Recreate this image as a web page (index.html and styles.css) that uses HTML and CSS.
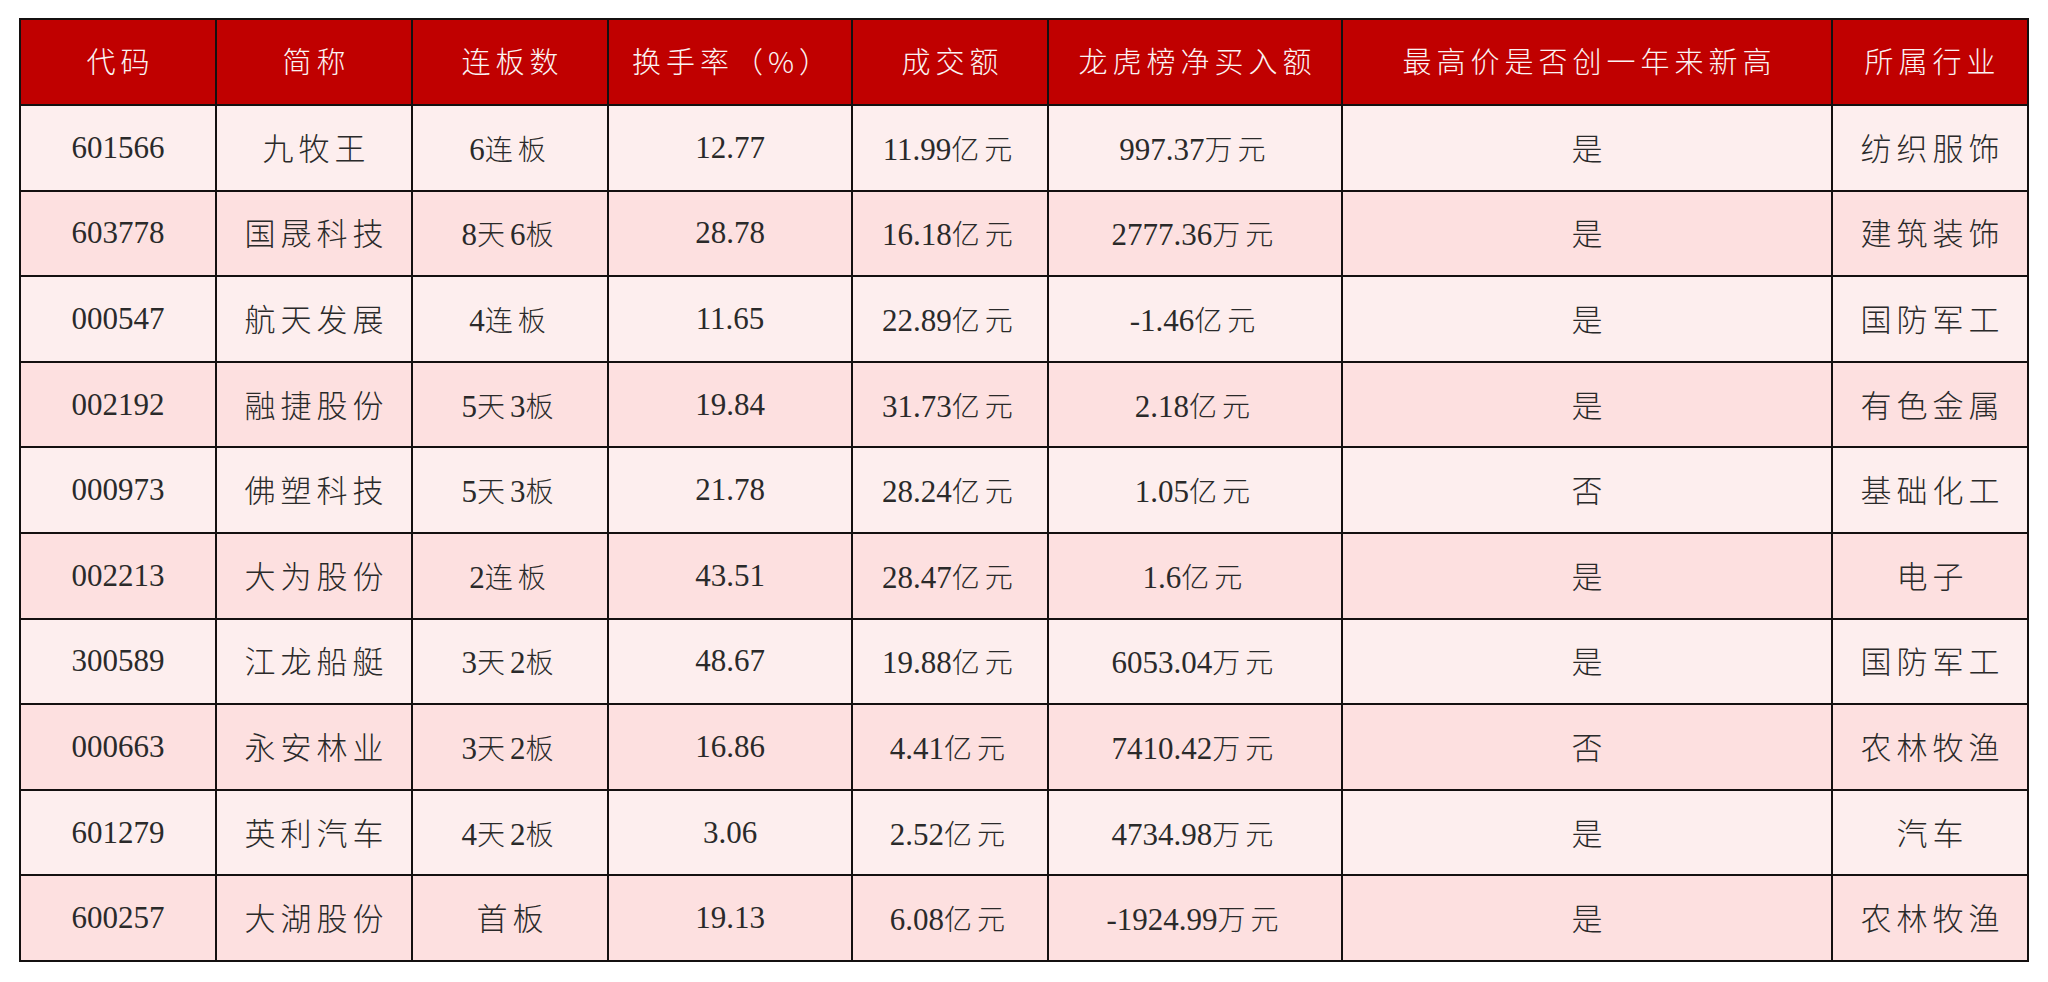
FILE: index.html
```html
<!DOCTYPE html>
<html lang="zh-CN">
<head>
<meta charset="utf-8">
<title>连板股</title>
<link rel="stylesheet" href="styles.css">
</head>
<body>
<table class="board">
  <colgroup>
    <col class="c-code"><col class="c-name"><col class="c-streak"><col class="c-turn">
    <col class="c-vol"><col class="c-lhb"><col class="c-high"><col class="c-ind">
  </colgroup>
  <thead>
    <tr>
      <th>代码</th><th>简称</th><th>连板数</th><th>换手率（%）</th>
      <th>成交额</th><th>龙虎榜净买入额</th><th>最高价是否创一年来新高</th><th>所属行业</th>
    </tr>
  </thead>
  <tbody>
    <tr><td>601566</td><td class="zh">九牧王</td><td>6<span class="zh">连板</span></td><td>12.77</td><td>11.99<span class="zh">亿元</span></td><td>997.37<span class="zh">万元</span></td><td class="zh">是</td><td class="zh">纺织服饰</td></tr>
    <tr><td>603778</td><td class="zh">国晟科技</td><td>8<span class="zh">天</span>6<span class="zh">板</span></td><td>28.78</td><td>16.18<span class="zh">亿元</span></td><td>2777.36<span class="zh">万元</span></td><td class="zh">是</td><td class="zh">建筑装饰</td></tr>
    <tr><td>000547</td><td class="zh">航天发展</td><td>4<span class="zh">连板</span></td><td>11.65</td><td>22.89<span class="zh">亿元</span></td><td>-1.46<span class="zh">亿元</span></td><td class="zh">是</td><td class="zh">国防军工</td></tr>
    <tr><td>002192</td><td class="zh">融捷股份</td><td>5<span class="zh">天</span>3<span class="zh">板</span></td><td>19.84</td><td>31.73<span class="zh">亿元</span></td><td>2.18<span class="zh">亿元</span></td><td class="zh">是</td><td class="zh">有色金属</td></tr>
    <tr><td>000973</td><td class="zh">佛塑科技</td><td>5<span class="zh">天</span>3<span class="zh">板</span></td><td>21.78</td><td>28.24<span class="zh">亿元</span></td><td>1.05<span class="zh">亿元</span></td><td class="zh">否</td><td class="zh">基础化工</td></tr>
    <tr><td>002213</td><td class="zh">大为股份</td><td>2<span class="zh">连板</span></td><td>43.51</td><td>28.47<span class="zh">亿元</span></td><td>1.6<span class="zh">亿元</span></td><td class="zh">是</td><td class="zh">电子</td></tr>
    <tr><td>300589</td><td class="zh">江龙船艇</td><td>3<span class="zh">天</span>2<span class="zh">板</span></td><td>48.67</td><td>19.88<span class="zh">亿元</span></td><td>6053.04<span class="zh">万元</span></td><td class="zh">是</td><td class="zh">国防军工</td></tr>
    <tr><td>000663</td><td class="zh">永安林业</td><td>3<span class="zh">天</span>2<span class="zh">板</span></td><td>16.86</td><td>4.41<span class="zh">亿元</span></td><td>7410.42<span class="zh">万元</span></td><td class="zh">否</td><td class="zh">农林牧渔</td></tr>
    <tr><td>601279</td><td class="zh">英利汽车</td><td>4<span class="zh">天</span>2<span class="zh">板</span></td><td>3.06</td><td>2.52<span class="zh">亿元</span></td><td>4734.98<span class="zh">万元</span></td><td class="zh">是</td><td class="zh">汽车</td></tr>
    <tr><td>600257</td><td class="zh">大湖股份</td><td class="zh">首板</td><td>19.13</td><td>6.08<span class="zh">亿元</span></td><td>-1924.99<span class="zh">万元</span></td><td class="zh">是</td><td class="zh">农林牧渔</td></tr>
  </tbody>
</table>
</body>
</html>
```

FILE: styles.css
```css
html, body {
  margin: 0;
  padding: 0;
  background: #ffffff;
}

body {
  font-family: "Liberation Serif", "Noto Sans CJK SC", serif;
  color: #2a2a2a;
}

.board {
  margin: 18px 0 0 19px;
  width: 2010px;
  table-layout: fixed;
  border-collapse: collapse;
}

.c-code, .c-name, .c-streak, .c-vol, .c-ind { width: 196px; }
.c-turn { width: 244px; }
.c-lhb { width: 294px; }
.c-high { width: 490px; }

.board th,
.board td {
  border: 2px solid #141010;
  text-align: center;
  vertical-align: middle;
  padding: 0;
  white-space: nowrap;
}

.board th {
  height: 86px;
  background: #c00000;
  color: #fbf3f3;
  font-family: "Noto Sans CJK SC", sans-serif;
  font-weight: 300;
  font-size: 29px;
  letter-spacing: 5px;
  text-indent: 5px;
  padding-bottom: 4px;
  box-sizing: border-box;
}

.board td {
  height: 85.6px;
  font-size: 31px;
  box-sizing: border-box;
}

.board tbody tr:nth-child(odd) td { background: #fdeeee; }
.board tbody tr:nth-child(even) td { background: #fde0e0; }

.zh {
  font-family: "Noto Sans CJK SC", sans-serif;
  font-weight: 300;
  font-size: 28px;
  letter-spacing: 5px;
}

td.zh {
  text-indent: 5px;
  padding-bottom: 3px;
}
```
